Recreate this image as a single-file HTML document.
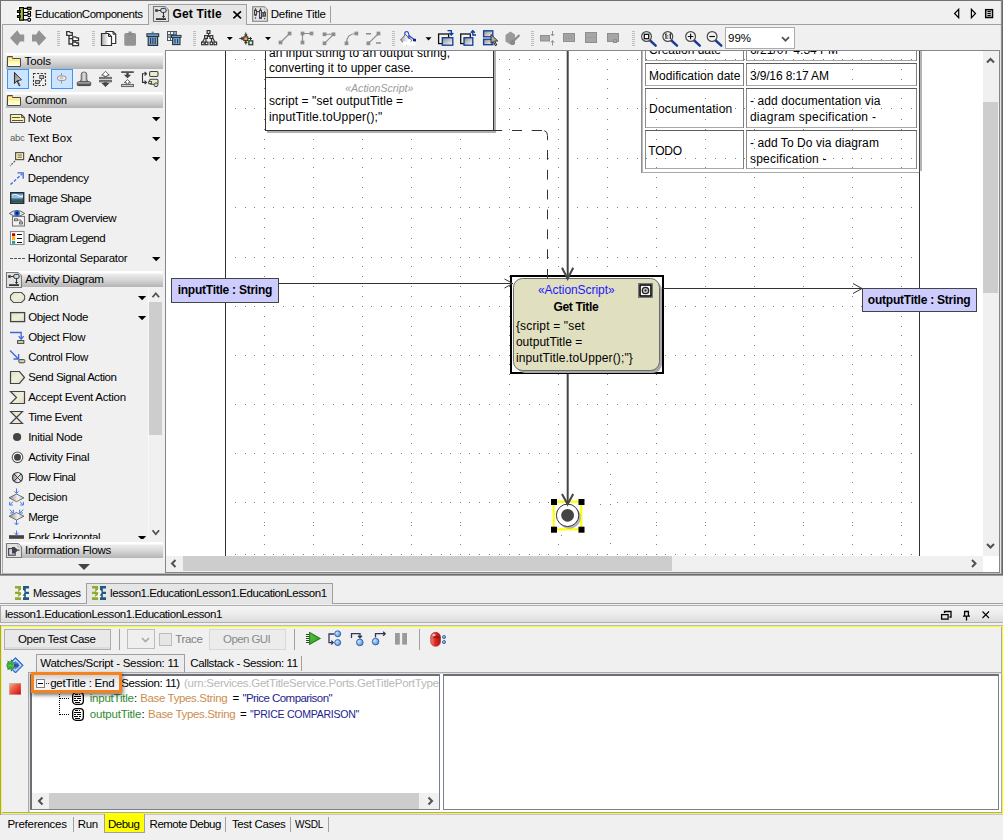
<!DOCTYPE html>
<html><head><meta charset="utf-8"><title>Get Title</title>
<style>
*{box-sizing:border-box;margin:0;padding:0}
html,body{width:1003px;height:840px;overflow:hidden;background:#f0f0f0}
body{position:relative;font-family:"Liberation Sans",sans-serif;font-size:11.5px;color:#000;letter-spacing:-0.4px}
.a{position:absolute}
.t{position:absolute;white-space:pre;line-height:14px;height:14px}
.b{font-weight:bold}
svg{position:absolute;overflow:visible}
.hdr{position:absolute;left:6px;width:157px;height:16px;background:linear-gradient(#ffffff 0,#ffffff 2px,#ececec 3px,#d6d6d6 9px,#b9b9b9 15px,#b4b4b4 16px)}
.dg{font-size:12px;letter-spacing:0;line-height:14px}
</style></head><body>
<!-- outer frame -->
<div class="a" style="left:0;top:0;width:1003px;height:1px;background:#707070"></div>
<div class="a" style="left:0;top:0;width:1px;height:576px;background:#707070"></div>
<div class="a" style="left:1000px;top:1px;width:1px;height:573px;background:#e6e6e6"></div><div class="a" style="left:1001px;top:0;width:1px;height:576px;background:#8c8c8c"></div><div class="a" style="left:1002px;top:0;width:1px;height:576px;background:#6a6a6a"></div>
<div class="a" style="left:0;top:574px;width:1003px;height:1px;background:#6e6e6e"></div><div class="a" style="left:0;top:575px;width:1003px;height:1px;background:#9c9c9c"></div><div class="a" style="left:2px;top:573px;width:999px;height:1px;background:#b8b8b8"></div>
<!-- tab content border -->
<div class="a" style="left:2px;top:24px;width:999px;height:1px;background:#a0a0a0"></div>
<div class="a" style="left:2px;top:24px;width:1px;height:550px;background:#a8a8a8"></div>
<!-- top tabs -->
<div class="a" style="left:148px;top:4px;width:99px;height:21px;background:#e6e6e6;border:1px solid #a0a0a0;border-bottom:none"></div>
<div class="t" style="left: 34.8px; top: 7px; letter-spacing: -0.459px;">EducationComponents</div>
<div class="t b" style="left: 172.4px; top: 7px; font-size: 12px; letter-spacing: 0.175px;">Get Title</div>
<div class="t" style="left: 270.7px; top: 7px; letter-spacing: -0.203px;">Define Title</div>
<div class="a" style="left:330px;top:6px;width:1px;height:17px;background:#a0a0a0"></div>
<svg style="left:0;top:0" width="340" height="26" viewBox="0 0 340 26">
<defs><linearGradient id="an" x1="0" y1="0" x2="1" y2="1"><stop offset="0" stop-color="#9ad0a8"></stop><stop offset=".6" stop-color="#d8e4ff"></stop><stop offset="1" stop-color="#a8d8b0"></stop></linearGradient>
<g id="adoc"><path d="M.5,.5H12L15.5,4V15.5H.5Z" fill="#e2e2e2" stroke="#777" stroke-width="1.1"></path><path d="M12,.5V4H15.5Z" fill="#fff" stroke="#999" stroke-width=".7"></path>
<rect x="2.2" y="3.2" width="2.6" height="2.6" fill="#333"></rect><path d="M5,4.5H8" stroke="#333"></path><rect x="7.7" y="2.4" width="5.4" height="4" rx="1.5" fill="url(#an)" stroke="#333" stroke-width="1"></rect>
<path d="M10.5,6.6V12.2M9.2,10.5H11.8" stroke="#333" stroke-width="1.1"></path><rect x="3" y="12.2" width="10" height="1.8" fill="#333"></rect></g></defs>
<!-- component icon -->
<g stroke="#fff" stroke-width="2.4" fill="#fff"><rect x="19" y="7.2" width="4.8" height="13.4"></rect><rect x="17" y="10.3" width="3" height="2.4"></rect><rect x="17" y="15.3" width="3" height="2.4"></rect><rect x="27" y="7" width="4.2" height="2.6"></rect><circle cx="29.2" cy="12.5" r="1.6"></circle><circle cx="29.2" cy="15.3" r="1.6"></circle><circle cx="29.2" cy="19.8" r="1.6"></circle></g>
<g stroke="#000" stroke-width="1.2"><path d="M24,8.3H27M24,12.5H27.5M24,15.3H27.5M24,19.8H27.5" fill="none"></path>
<rect x="19.6" y="7.6" width="3.8" height="12.6" fill="#a2c637"></rect><rect x="17.5" y="10.6" width="2.6" height="1.8" fill="#a2c637"></rect><rect x="17.5" y="15.6" width="2.6" height="1.8" fill="#a2c637"></rect>
<rect x="27.4" y="7.3" width="3.6" height="2" fill="#a2c637"></rect><circle cx="29.2" cy="12.5" r="1.5" fill="#fff"></circle><circle cx="29.2" cy="15.3" r="1.5" fill="#fff"></circle><circle cx="29.2" cy="19.8" r="1.5" fill="#fff"></circle></g>
<use href="#adoc" x="153" y="6"></use>
<path d="M233.4,11.3L241,18.3M241,11.3L233.4,18.3" stroke="#000" stroke-width="1.6"></path>
<!-- define title icon -->
<path d="M252.7,6.7H264.3L267.4,9.8V21.2H252.7Z" fill="#e4e4e4" stroke="#7a7a7a" stroke-width="1.1"></path><path d="M264.3,6.7V9.8H267.4Z" fill="#fff" stroke="#a0a0a0" stroke-width=".6"></path>
<g stroke="#444" stroke-width="1" fill="#cbc4f2">
<path d="M255.5,8.2V10M255.5,15V16M255.5,17.3V18.8M260.5,8.2V10M264.6,11V12.3" fill="none" stroke-width="1.1"></path>
<rect x="254.5" y="10.1" width="2" height="4.9"></rect><rect x="259.5" y="10.2" width="2" height="8.2"></rect>
<rect x="257" y="11" width="2.2" height="1.2" fill="#444" stroke="none"></rect>
<rect x="262.1" y="12.6" width="1.6" height="3.6" fill="#fff"></rect><rect x="263.9" y="12.6" width="1.6" height="3.6"></rect>
<rect x="264" y="18" width="1.2" height="1.2" fill="#444" stroke="none"></rect></g>
</svg>
<!-- top toolbar -->
<svg style="left:0;top:0" width="1003" height="52" viewBox="0 0 1003 52">
<defs>
<linearGradient id="pg" x1="0" y1="0" x2="1" y2="0"><stop offset="0" stop-color="#a8a8a8"></stop><stop offset=".7" stop-color="#fff"></stop></linearGradient>
<linearGradient id="sq" x1="0" y1="0" x2="1" y2="1"><stop offset="0" stop-color="#888"></stop><stop offset="1" stop-color="#fff"></stop></linearGradient>
<g id="grip" stroke="#bdbdbd" stroke-width="1"><path d="M0,.5h3M0,2.5h3M0,4.5h3M0,6.5h3M0,8.5h3M0,10.5h3M0,12.5h3M0,14.5h3"></path></g>
<g id="mag"><path d="M3.6,4L9.2,9.2" stroke="#1b3b9c" stroke-width="2.4" stroke-linecap="round"></path><circle cx="0" cy="0" r="4.9" fill="#f4f4f4" stroke="#4a4a4a" stroke-width="1.2"></circle></g>
<path id="ddt" d="M0,0H6L3,3.2Z" fill="#000"></path>
</defs>
<!-- back/forward -->
<path d="M10,38L17.3,30.3L20,34.5H24.2V41.5H20L17.3,45.7Z" fill="#939393"></path>
<path d="M46.2,38L38.9,30.3L36.2,34.5H32V41.5H36.2L38.9,45.7Z" fill="#939393"></path>
<use href="#grip" x="57" y="31"></use>
<!-- tree -->
<g fill="#fff" stroke="#333" stroke-width="1.3"><path d="M66.7,31.7H69.5L70.5,32.7H72.3V35.3H66.7Z"></path><path d="M69,35.5V44H73M69,38.7H73" fill="none"></path><path d="M72.7,36.9H75.5L76.5,37.9H78.5V40.7H72.7Z"></path><path d="M72.7,42H75.5L76.5,43H78.5V45.6H72.7Z"></path></g>
<use href="#grip" x="92" y="31"></use>
<!-- copy -->
<path d="M106,31.5H113L115.7,34.2V43.5H106Z" fill="#fff" stroke="#333" stroke-width="1.2"></path>
<path d="M101.5,33.5H108.5L111.5,36.5V45.5H101.5Z" fill="url(#pg)" stroke="#333" stroke-width="1.2"></path>
<path d="M108.5,33.5V36.5H111.5M113,31.5V34.2H115.7" fill="none" stroke="#333" stroke-width="1"></path>
<!-- paste disabled -->
<path d="M124.3,34.5Q124.3,33 126,33H128.5V31.5H131.7V33H134.3Q136,33 136,34.5V44.5Q136,45.8 134.5,45.8H125.8Q124.3,45.8 124.3,44.5Z" fill="#939393"></path>
<path d="M127.5,34.2H132.8" stroke="#858585" stroke-width="1.4"></path>
<!-- trash -->
<path d="M151.6,32.3H153.8" stroke="#5a9ae0" stroke-width="1.4"></path>
<rect x="146.9" y="33.8" width="11.8" height="2.6" fill="#6fb0f0" stroke="#333" stroke-width="1.1"></rect>
<path d="M148.2,36.6H157.6V45.4H148.2Z" fill="#6fb0f0" stroke="#333" stroke-width="1.2"></path>
<path d="M150.6,38V44M152.9,38V44M155.2,38V44" stroke="#333" stroke-width="1.1"></path>
<!-- table trash -->
<rect x="167.5" y="31.5" width="9" height="9" fill="#f4f4f4" stroke="#555"></rect>
<path d="M170.5,31.5V40.5M173.5,31.5V40.5M167.5,34.5H176.5M167.5,37.5H176.5" stroke="#555" stroke-width=".9"></path>
<rect x="168" y="35" width="2.3" height="2.3" fill="#6fb0f0"></rect><rect x="174" y="32" width="2.3" height="2.3" fill="#6fb0f0"></rect>
<rect x="171.5" y="35.4" width="9.5" height="2" fill="#6fb0f0" stroke="#333" stroke-width="1"></rect>
<rect x="172.6" y="37.6" width="7.4" height="7" fill="#6fb0f0" stroke="#333" stroke-width="1.1"></rect>
<path d="M175,39V43.5M177.6,39V43.5" stroke="#333" stroke-width="1"></path>
<use href="#grip" x="193" y="31"></use>
<!-- layout tree -->
<g fill="none" stroke="#333" stroke-width="1.2"><path d="M208.6,33V36M206,38.5V42M211.5,38.5V42M205,37.5L202.5,42M212.3,37.5L215,42M206,36.5H211"></path>
<rect x="207.1" y="30.6" width="2.8" height="2.8" fill="#fff"></rect><rect x="204.6" y="35.6" width="2.8" height="2.8" fill="#fff"></rect><rect x="210" y="35.6" width="2.8" height="2.8" fill="#fff"></rect>
<rect x="201.6" y="42.1" width="2.6" height="2.6" fill="#fff"></rect><rect x="205.3" y="42.1" width="2.6" height="2.6" fill="#fff"></rect><rect x="210.1" y="42.1" width="2.6" height="2.6" fill="#fff"></rect><rect x="214" y="42.1" width="2.6" height="2.6" fill="#fff"></rect></g>
<use href="#ddt" x="226.8" y="37"></use>
<!-- center icon -->
<g stroke="#333" stroke-width="1.1" fill="none"><path d="M239.3,38.5H243M245.8,32.5V36M245.8,41V44.6M248,38.5H252M241.5,37L243,38.5L241.5,40M244.5,34.5L245.8,36L247.2,34.5M244.5,43L245.8,41.5L247.2,43M250.5,37V40"></path>
<rect x="243.8" y="36.8" width="4" height="3.8" fill="#ffa640"></rect><rect x="248.8" y="40.8" width="4" height="4" fill="#3fb860"></rect></g>
<rect x="249.8" y="41.8" width="2" height="2" fill="#eafff0"></rect>
<use href="#ddt" x="265" y="37"></use>
<!-- path style icons (disabled grey) -->
<g fill="#8c8c8c" stroke="#8c8c8c" stroke-width="1.1">
<path d="M280.5,42.5L289.6,33.5" fill="none"></path><rect x="279.2" y="41.2" width="2.6" height="2.6"></rect><rect x="288.3" y="32.2" width="2.6" height="2.6"></rect>
<path d="M302.5,42.5V33.5H311.5" fill="none"></path><rect x="301.2" y="41.2" width="2.6" height="2.6"></rect><rect x="301.2" y="32.2" width="2.6" height="2.6"></rect><rect x="310.2" y="32.2" width="2.6" height="2.6"></rect>
<path d="M324.5,34.3H333.5L324.5,43.3" fill="none"></path><rect x="323.2" y="33" width="2.6" height="2.6"></rect><rect x="332.2" y="33" width="2.6" height="2.6"></rect><rect x="323.2" y="42" width="2.6" height="2.6"></rect>
<path d="M346.5,43.3Q346.5,33.5 356.4,33.5" fill="none"></path><rect x="345.2" y="42" width="2.6" height="2.6"></rect><rect x="355.1" y="32.2" width="2.6" height="2.6"></rect>
<path d="M368.4,43.3L378.5,33.5" fill="none"></path><rect x="367.1" y="42" width="2.6" height="2.6"></rect><rect x="377.2" y="32.2" width="2.6" height="2.6"></rect>
<path d="M366,33.8H371M376,43H381" fill="none" stroke-width="1.5"></path></g>
<use href="#grip" x="392" y="31"></use>
<!-- paint bucket -->
<path d="M400.5,40L405.5,34.5L412,40.5L406.5,45.2Z" fill="url(#pg)" stroke="#666" stroke-width="1"></path>
<path d="M405,35Q404,31.5 407,31.5Q409,32 409,37" fill="none" stroke="#2a50c0" stroke-width="1.2"></path>
<circle cx="409" cy="37.6" r="1" fill="none" stroke="#2a50c0" stroke-width=".9"></circle>
<path d="M409,35.5L414,39.5" stroke="#2a50c0" stroke-width="1.2"></path>
<rect x="413" y="38.8" width="3" height="2.8" fill="#101a8c"></rect>
<rect x="403" y="41.5" width="12.4" height="4" fill="#fff"></rect>
<use href="#ddt" x="425.5" y="37.2"></use>
<!-- z-order icons -->
<rect x="438.6" y="34" width="10" height="9.6" fill="#f4f4f4" stroke="#111" stroke-width="1.3"></rect>
<rect x="442.3" y="37.7" width="10.5" height="7.5" fill="url(#sq)" stroke="#0b3a9a" stroke-width="1.3"></rect>
<path d="M447.5,30.7H451.3V34.6M449.3,33L451.3,35L453.3,33" fill="none" stroke="#0b3a9a" stroke-width="1.3"></path>
<rect x="460.7" y="34" width="9.6" height="9.6" fill="#f4f4f4" stroke="#111" stroke-width="1.3"></rect>
<rect x="464" y="37.7" width="8.8" height="7.5" fill="url(#sq)" stroke="#0b3a9a" stroke-width="1.3"></rect>
<path d="M476,35H472.8V31M470.8,32.7L472.8,30.7L474.8,32.7" fill="none" stroke="#0b3a9a" stroke-width="1.3"></path>
<rect x="483.6" y="30.8" width="9.2" height="6" fill="url(#sq)" stroke="#0b3a9a" stroke-width="1.3"></rect>
<rect x="483.6" y="39.2" width="9.2" height="5.5" fill="url(#sq)" stroke="#0b3a9a" stroke-width="1.3"></rect>
<path d="M491,34.5V43.5L493.3,41.5L495.3,45.8L496.8,45L494.8,41L497.8,41Z" fill="#aaa" stroke="#222" stroke-width=".9"></path>
<!-- disabled brush -->
<path d="M505.5,35L510.5,31.5L515,34.5V41.5L510.5,44.5L505.5,41.5Z" fill="#9a9a9a"></path>
<path d="M519.5,35L513.5,41" stroke="#8a8a8a" stroke-width="2.2"></path><circle cx="512.5" cy="42.5" r="2.6" fill="#8a8a8a"></circle>
<use href="#grip" x="531" y="31"></use>
<!-- disabled rect icons -->
<g fill="#a6a6a6" stroke="#8e8e8e" stroke-width="1">
<rect x="540.5" y="35.5" width="9" height="5.5"></rect>
<path d="M552.5,31V35.5M550.8,34L552.5,36L554.2,34M552.5,45.5V41M550.8,42.5L552.5,40.5L554.2,42.5" fill="none"></path>
<rect x="563.5" y="33.5" width="11" height="8"></rect><rect x="585.5" y="32.5" width="11" height="10"></rect><rect x="607.5" y="33.5" width="11" height="8"></rect>
</g>
<path d="M565.5,36H572.5M565.5,38.5H572.5" stroke="#929292" stroke-dasharray="1.5 1"></path><path d="M586,37.5H596.5" stroke="#9c9c9c"></path><rect x="613.5" y="39.5" width="3" height="3" fill="#a6a6a6" stroke="#8e8e8e"></rect>
<use href="#grip" x="632" y="31"></use>
<!-- zoom icons -->
<use href="#mag" x="646.5" y="36.5"></use><rect x="644.3" y="34.3" width="4.4" height="4.4" fill="#fff" stroke="#111" stroke-width="1.3"></rect>
<use href="#mag" x="667.8" y="36.5"></use><path d="M665.2,34.5L666,34V39M669.5,34.5L670.3,34V39" stroke="#111" stroke-width="1.1" fill="none"></path><rect x="667.3" y="35.3" width="1" height="1" fill="#111"></rect><rect x="667.3" y="37.6" width="1" height="1" fill="#111"></rect>
<use href="#mag" x="690.6" y="36.5"></use><path d="M687.8,36.5H693.4M690.6,33.7V39.3" stroke="#111" stroke-width="1.2"></path>
<use href="#mag" x="712.1" y="36.5"></use><path d="M709.3,36.5H714.9" stroke="#111" stroke-width="1.2"></path>
<!-- zoom combo -->
<rect x="725.5" y="27.5" width="69" height="21" fill="#fff" stroke="#ababab"></rect>
<path d="M782,37.2L785.5,40.7L789,37.2" fill="none" stroke="#555" stroke-width="1.8"></path>
<!-- tab nav icons -->
<g fill="none" stroke="#000" stroke-width="1.2"><path d="M958.7,9.3V17.7L954.6,13.5Z"></path><path d="M971.4,9.3V17.7L975.5,13.5Z"></path><rect x="985.7" y="9.7" width="6.8" height="7.8" stroke-width="1.5"></rect><path d="M987.4,11.6H990.8M987.4,13.6H990.8M987.4,15.6H990.8" stroke-width="1.1"></path></g>
</svg>
<div class="t" style="left:728px;top:31px;letter-spacing:0">99%</div>
<!-- palette -->
<div class="hdr" style="top:53px"></div>
<svg style="left:7px;top:53px" width="14" height="16" viewBox="0 0 14 16"><defs><linearGradient id="fg53" x1="0" y1="0" x2="0" y2="1"><stop offset="0" stop-color="#fff9a0"></stop><stop offset=".45" stop-color="#ffe98a"></stop><stop offset=".55" stop-color="#fffbb8"></stop><stop offset="1" stop-color="#fffff0"></stop></linearGradient></defs><path d="M.5,3.5H5.5V5.5H13.5V13.5H.5Z" fill="url(#fg53)" stroke="#4a4a4a"></path><path d="M1,4.5H5.5" stroke="#e8b860"></path></svg>
<div class="t" style="left: 24.5px; top: 54px; letter-spacing: -0.115px;">Tools</div>
<div class="hdr" style="top:92px"></div>
<svg style="left:7px;top:92px" width="14" height="16" viewBox="0 0 14 16"><defs><linearGradient id="fg92" x1="0" y1="0" x2="0" y2="1"><stop offset="0" stop-color="#fff9a0"></stop><stop offset=".45" stop-color="#ffe98a"></stop><stop offset=".55" stop-color="#fffbb8"></stop><stop offset="1" stop-color="#fffff0"></stop></linearGradient></defs><path d="M.5,3.5H5.5V5.5H13.5V13.5H.5Z" fill="url(#fg92)" stroke="#4a4a4a"></path><path d="M1,4.5H5.5" stroke="#e8b860"></path></svg>
<div class="t" style="left: 24.9px; top: 93px; letter-spacing: -0.3px; transform-origin: 0px 50%; transform: scaleX(0.9279);">Common</div>
<div class="hdr" style="top:271px"></div>
<svg style="left:6px;top:271px" width="17" height="17" viewBox="0 -1 17 17"><use href="#adoc" x="0" y="0"></use></svg>
<div class="t" style="left: 25.3px; top: 272px; letter-spacing: -0.299px;">Activity Diagram</div>
<div class="hdr" style="top:542px"></div>
<svg style="left:6px;top:542px" width="17" height="17" viewBox="0 -1 17 17"><path d="M.5,.5H12L15.5,4V14.5H.5Z" fill="#e2e2e2" stroke="#777" stroke-width="1.1"></path><path d="M12,.5V4H15.5Z" fill="#fff" stroke="#999" stroke-width=".7"></path><rect x="2.6" y="5.6" width="6.6" height="6.6" fill="#d8d0f0" stroke="#444" stroke-width="1.1"></rect><path d="M6,4H8.5L11.5,6.5H13.5V7.8H11.5L8.5,10.4H6Z" fill="#444"></path></svg>
<div class="t" style="left: 25px; top: 543px; letter-spacing: -0.279px;">Information Flows</div>
<div class="a" style="left:7px;top:69px;width:22px;height:20px;background:#cce4ff;border:1px solid #3399ff"></div>
<div class="a" style="left:51px;top:69px;width:22px;height:20px;background:#cce4ff;border:1px solid #3399ff"></div>
<svg style="left:0;top:0" width="170" height="300" viewBox="0 0 170 300"><defs>
<linearGradient id="og" x1="0" y1="0" x2="1" y2="1"><stop offset="0" stop-color="#dfe3c0"></stop><stop offset=".5" stop-color="#eef0dc"></stop><stop offset="1" stop-color="#dcdfc0"></stop></linearGradient>
<linearGradient id="dm" x1="0" y1="0" x2="1" y2="0"><stop offset="0" stop-color="#8a8a8a"></stop><stop offset=".6" stop-color="#f4f4f4"></stop><stop offset="1" stop-color="#b0b0b0"></stop></linearGradient>
<linearGradient id="img" x1="0" y1="0" x2="0" y2="1"><stop offset="0" stop-color="#4f8fdc"></stop><stop offset=".45" stop-color="#9cc4ea"></stop><stop offset=".6" stop-color="#3c6f78"></stop><stop offset=".85" stop-color="#2a5050"></stop><stop offset="1" stop-color="#7fb0e0"></stop></linearGradient>
<linearGradient id="stp" x1="0" y1="0" x2="1" y2="0"><stop offset="0" stop-color="#555"></stop><stop offset=".5" stop-color="#e8e8e8"></stop><stop offset="1" stop-color="#555"></stop></linearGradient>
<linearGradient id="stb" x1="0" y1="0" x2="0" y2="1"><stop offset="0" stop-color="#ddd"></stop><stop offset="1" stop-color="#222"></stop></linearGradient>
<linearGradient id="cur" x1="0" y1="0" x2="1" y2="1"><stop offset="0" stop-color="#777"></stop><stop offset="1" stop-color="#eee"></stop></linearGradient>
</defs>
<!-- select cursor -->
<path d="M14.5,72.5V83L17,80.8L19.3,85.5" fill="none" stroke="#333" stroke-width="1.1" stroke-dasharray="0"></path>
<path d="M14.5,72.5V83.2L17.2,80.7L21.5,79.8Z" fill="url(#cur)" stroke="#333" stroke-width="1"></path>
<path d="M17.5,81L19.8,86" stroke="#333" stroke-width="1.6" stroke-dasharray="1.4 .8"></path>
<!-- group select -->
<rect x="33.5" y="73.5" width="12" height="12" fill="none" stroke="#333" stroke-width="1.1" stroke-dasharray="2.2 1.4"></rect>
<rect x="39.8" y="75.6" width="3.8" height="2.8" fill="#d8d8d8" stroke="#444"></rect><rect x="35.6" y="80.6" width="3.8" height="2.8" fill="#d8d8d8" stroke="#444"></rect><path d="M41.5,78.5V80L39.5,82" fill="none" stroke="#444"></path>
<!-- sticky -->
<path d="M61.5,73V75.5M61.5,81V83.5" stroke="#999" stroke-width="1"></path>
<rect x="57.5" y="76" width="8.5" height="4.4" rx="2.2" fill="#fff" stroke="#8a8a8a" stroke-width="1"></rect><rect x="59.5" y="77" width="4" height="2.4" fill="#c8c8c8"></rect>
<!-- stamp -->
<path d="M81.2,74.2Q81.2,72 84,72Q86.8,72 86.8,74.2V79Q86.8,80.5 88.5,81.5H79.5Q81.2,80.5 81.2,79Z" fill="url(#stp)" stroke="#555" stroke-width=".8"></path>
<rect x="77.3" y="81.8" width="13.4" height="3.8" rx="1" fill="url(#stb)" stroke="#333" stroke-width=".8"></rect>
<!-- space in/out -->
<path d="M105.5,71.3L109.3,75.2H107V76.6H104V75.2H101.7Z" fill="#fff" stroke="#555" stroke-width=".9"></path>
<rect x="99.6" y="77.3" width="11.8" height="1.5" fill="#999" stroke="#555" stroke-width=".8"></rect><rect x="99.6" y="80.4" width="11.8" height="1.5" fill="#999" stroke="#555" stroke-width=".8"></rect>
<path d="M105.5,86.9L101.2,82.7H104V82.2H107V82.7H109.8Z" fill="#444"></path>
<rect x="121.2" y="71.3" width="12.6" height="1.6" fill="#444"></rect>
<path d="M126.3,72.9H128.7V74.8H131.2L127.5,78.2L123.8,74.8H126.3Z" fill="#444"></path>
<path d="M127.5,79.6L130.6,82.6H128.7V84.2H126.3V82.6H124.4Z" fill="#fff" stroke="#555" stroke-width=".9"></path>
<rect x="121.6" y="84.4" width="11.8" height="2.2" fill="#ccc" stroke="#555" stroke-width=".9"></rect>
<!-- convert -->
<path d="M146.3,73.8H142.5V82.4H146.3M144.6,72L146.5,73.8L144.6,75.6M144.6,80.6L146.5,82.4L144.6,84.2" fill="none" stroke="#333" stroke-width="1.1"></path>
<rect x="149.6" y="71.5" width="8.4" height="5" rx="1.2" fill="#e9edc4" stroke="#444" stroke-width="1.1"></rect>
<rect x="149.6" y="79.3" width="8.4" height="5" rx="1.2" fill="#e9edc4" stroke="#444" stroke-width="1.1"></rect>
<rect x="148.6" y="81.6" width="3" height="2" fill="#e9edc4" stroke="#444" stroke-width=".9"></rect>
<circle cx="156" cy="84.8" r="1.9" fill="#fff" stroke="#444" stroke-width="1"></circle><circle cx="156" cy="84.8" r=".6" fill="#444"></circle>

<!-- note -->
<path d="M10.5,114.5H21.5L24.5,117.5V122.5H10.5Z" fill="#fff3b0" stroke="#555" stroke-width="1.2"></path><path d="M21.5,114.5V117.5H24.5" fill="none" stroke="#555" stroke-width="1"></path><path d="M12,117.5H20M12,120.5H23" fill="none" stroke="#555" stroke-width="1" shape-rendering="crispEdges"></path>
<!-- anchor -->
<rect x="15.6" y="152.6" width="8" height="7" fill="#fff3b0" stroke="#555" stroke-width="1.2"></rect><path d="M17.5,155H22M17.5,157.2H22" stroke="#555" stroke-width=".9"></path><path d="M15,161L10,166" stroke="#555" stroke-width="1.2" stroke-dasharray="2 1.2"></path>
<!-- dependency -->
<path d="M10.5,184.5L22,174" stroke="#3a66d8" stroke-width="1.3" stroke-dasharray="3 1.6" fill="none"></path><path d="M17.5,172.8H23.2V178.8" stroke="#3a66d8" stroke-width="1.3" fill="none"></path>
<!-- image shape -->
<rect x="10.7" y="192.7" width="13" height="10.6" fill="url(#img)" stroke="#2c2c2c" stroke-width="1.4"></rect><path d="M12,195.5Q15,193.5 18,195.5T23,195.5" stroke="#fff" stroke-width="1.2" fill="none" opacity=".85"></path>
<!-- overview -->
<rect x="12.5" y="216.5" width="12" height="9.5" fill="#f4f4f4" stroke="#777" stroke-width="1.1"></rect>
<rect x="14.5" y="218.8" width="3" height="2" fill="#ccd" stroke="#555" stroke-width=".8"></rect><rect x="19.5" y="222" width="3" height="2" fill="#ccd" stroke="#555" stroke-width=".8"></rect><path d="M17.5,220H21V222" fill="none" stroke="#555" stroke-width=".8"></path>
<path d="M9.3,213.5Q17,207.5 24.7,213.5Q17,219 9.3,213.5Z" fill="#e8e8e8" stroke="#666" stroke-width="1"></path><circle cx="17" cy="213.3" r="2.8" fill="#1a5fe6"></circle><circle cx="17" cy="213.3" r="1.2" fill="#10204a"></circle>
<!-- legend -->
<rect x="10.5" y="231.5" width="13.5" height="13" fill="#fff" stroke="#8a8a8a" stroke-width="1.1"></rect>
<rect x="12" y="233.3" width="3.2" height="3" fill="#c80000"></rect><rect x="12" y="237" width="3.2" height="3" fill="#ffb400"></rect><rect x="12" y="240.8" width="3.2" height="3" fill="#2a9a8a"></rect>
<path d="M17,234.5H22M17,238.5H22M17,242.5H22" stroke="#111" stroke-width="1" shape-rendering="crispEdges"></path>
<!-- separator -->
<path d="M10,258.5H25" stroke="#555" stroke-width="1.1" stroke-dasharray="3 1"></path>
</svg>
<div class="t" style="left: 27.7px; top: 111px; letter-spacing: -0.066px;">Note</div>
<svg style="left:152.3px;top:117px" width="9" height="5"><path d="M0,0H8.4L4.2,4.3Z" fill="#000"></path></svg>
<div class="t" style="left: 27.7px; top: 131px; letter-spacing: 0.027px;">Text Box</div>
<svg style="left:152.3px;top:137px" width="9" height="5"><path d="M0,0H8.4L4.2,4.3Z" fill="#000"></path></svg>
<div class="t" style="left: 27.7px; top: 151px; letter-spacing: -0.307px;">Anchor</div>
<svg style="left:152.3px;top:157px" width="9" height="5"><path d="M0,0H8.4L4.2,4.3Z" fill="#000"></path></svg>
<div class="t" style="left: 27.7px; top: 171px; letter-spacing: -0.364px;">Dependency</div>
<div class="t" style="left: 27.7px; top: 191px; letter-spacing: -0.452px;">Image Shape</div>
<div class="t" style="left: 27.7px; top: 211px; letter-spacing: -0.379px;">Diagram Overview</div>
<div class="t" style="left: 27.7px; top: 231px; letter-spacing: -0.549px;">Diagram Legend</div>
<div class="t" style="left: 27.7px; top: 251px; letter-spacing: -0.294px;">Horizontal Separator</div>
<svg style="left:152.3px;top:257px" width="9" height="5"><path d="M0,0H8.4L4.2,4.3Z" fill="#000"></path></svg>
<div class="t" style="left:10px;top:131px;font-size:9.5px;color:#5a5a5a;letter-spacing:-0.25px">abc</div>
<div class="a" style="left:4px;top:287px;width:145px;height:252px;overflow:hidden"><div class="a" style="left:-4px;top:-287px;width:200px;height:600px">
<div class="t" style="left: 28.2px; top: 290px; letter-spacing: -0.314px;">Action</div>
<svg style="left:137.6px;top:296px" width="9" height="5"><path d="M0,0H8.2L4.1,4.3Z" fill="#000"></path></svg>
<div class="t" style="left: 28.2px; top: 310px; letter-spacing: -0.374px;">Object Node</div>
<svg style="left:137.6px;top:316px" width="9" height="5"><path d="M0,0H8.2L4.1,4.3Z" fill="#000"></path></svg>
<div class="t" style="left: 28.2px; top: 330px; letter-spacing: -0.342px;">Object Flow</div>
<div class="t" style="left: 28.2px; top: 350px; letter-spacing: -0.397px;">Control Flow</div>
<div class="t" style="left: 28.2px; top: 370px; letter-spacing: -0.467px;">Send Signal Action</div>
<div class="t" style="left: 28.2px; top: 390px; letter-spacing: -0.244px;">Accept Event Action</div>
<div class="t" style="left: 28.2px; top: 410px; letter-spacing: -0.426px;">Time Event</div>
<div class="t" style="left: 28.2px; top: 430px; letter-spacing: -0.286px;">Initial Node</div>
<div class="t" style="left: 28.2px; top: 450px; letter-spacing: -0.242px;">Activity Final</div>
<div class="t" style="left: 28.2px; top: 470px; letter-spacing: -0.523px;">Flow Final</div>
<div class="t" style="left: 28.2px; top: 490px; letter-spacing: -0.3px; transform-origin: 0px 50%; transform: scaleX(0.9426);">Decision</div>
<div class="t" style="left: 28.2px; top: 510px; letter-spacing: -0.552px;">Merge</div>
<div class="t" style="left: 28.2px; top: 530px; letter-spacing: -0.398px;">Fork Horizontal</div>
<svg style="left:137.6px;top:536px" width="9" height="5"><path d="M0,0H8.2L4.1,4.3Z" fill="#000"></path></svg>
<svg style="left:0;top:0" width="170" height="600" viewBox="0 0 170 600">
<!-- action -->
<path d="M13.5,292.5H21.5L24.6,295.5V299.5L21.5,302.5H13.5L10.5,299.5V295.5Z" fill="url(#og)" stroke="#555" stroke-width="1.1"></path>
<rect x="10.6" y="312.6" width="14" height="9" fill="url(#og)" stroke="#444" stroke-width="1.3"></rect>
<!-- object flow -->
<path d="M10,332.5H21.2V339" fill="none" stroke="#3a66e0" stroke-width="1.3"></path><path d="M18.7,336.2L21.2,339.2L23.7,336.2" fill="none" stroke="#3a66e0" stroke-width="1.3"></path><rect x="17.6" y="340.6" width="6.2" height="2.8" fill="#d8dca0" stroke="#444" stroke-width="1"></rect>
<!-- control flow -->
<path d="M10,350.5L18.2,358.7" stroke="#3a66e0" stroke-width="1.3"></path><path d="M18.6,354V359H13.5" fill="none" stroke="#3a66e0" stroke-width="1.3"></path><rect x="18.8" y="359.6" width="6" height="3.2" rx="1" fill="#d0d0a0" stroke="#444" stroke-width="1"></rect>
<!-- send signal -->
<path d="M10.5,371.5H19.5L24.5,377.5L19.5,383.5H10.5Z" fill="url(#og)" stroke="#444" stroke-width="1.2"></path>
<path d="M10.5,391.5H24.5V403.5H10.5L16.5,397.5Z" fill="url(#og)" stroke="#444" stroke-width="1.2"></path>
<path d="M10.5,411.5H22.5L10.5,423.5H22.5Z" fill="url(#og)" stroke="#444" stroke-width="1.2"></path>
<circle cx="17.1" cy="437" r="4.1" fill="#444"></circle>
<circle cx="17.5" cy="457.3" r="5.3" fill="#fff" stroke="#555" stroke-width="1.1"></circle><circle cx="17.5" cy="457.3" r="3.5" fill="#444"></circle>
<circle cx="17.5" cy="477.6" r="5.1" fill="url(#dm)" stroke="#444" stroke-width="1.1"></circle><path d="M14,474.1L21,481.1M21,474.1L14,481.1" stroke="#333" stroke-width="1"></path>
<!-- decision -->
<path d="M9,497.8L16.5,494L24,497.8L16.5,501.7Z" fill="url(#dm)" stroke="#666" stroke-width=".9"></path>
<g fill="none" stroke="#4a78ee" stroke-width="1"><path d="M16.5,488.5V493.5M14.5,491.3L16.5,493.5L18.5,491.3"></path><path d="M13,501.8L9.8,504.8M9.6,501.8V505H12.8"></path><path d="M20,501.8L23.2,504.8M23.4,501.8V505H20.2"></path>
<path d="M9.6,509.5L13.2,513M10,513H13.3V509.7"></path><path d="M23.4,509.5L19.8,513M23,513H19.7V509.7"></path><path d="M16.5,520V525M14.5,522.8L16.5,525L18.5,522.8"></path>
<path d="M16.5,530.5V535M14.5,532.8L16.5,535L18.5,532.8"></path></g>
<path d="M9,516.2L16.5,512.5L24,516.2L16.5,520Z" fill="url(#dm)" stroke="#666" stroke-width=".9"></path>
<rect x="9" y="535.2" width="15" height="3.6" fill="#444"></rect>
</svg>
</div></div>
<div class="a" style="left:148px;top:287px;width:1px;height:252px;background:#f8f8f8"></div>
<div class="a" style="left:149px;top:287px;width:14px;height:252px;background:#f0f0f0"></div>
<div class="a" style="left:149px;top:302px;width:13px;height:133px;background:#cdcdcd"></div>
<svg style="left:0;top:0" width="200" height="600"><g fill="none" stroke="#505050" stroke-width="1.8"><path d="M152.5,297.3L155.8,293.3L159.1,297.3"></path><path d="M152.5,530.2L155.8,534.2L159.1,530.2"></path></g><path d="M78,564H90L84,570Z" fill="#444"></path></svg>
<!-- canvas -->
<div class="a" style="left:165px;top:50px;width:835px;height:523px;border:1px solid #828790;background:#fff"></div>
<div class="a" id="cv" style="left:166px;top:51px;width:817px;height:505px;overflow:hidden;background:#fff">
<div class="a" style="left:-166px;top:-51px;width:1003px;height:840px">
<svg style="left:0;top:0" width="1003" height="840" viewBox="0 0 1003 840">
<path d="M235,59.5h1M245,59.5h1M254,59.5h1M264,59.5h1M273,59.5h1M283,59.5h1M293,59.5h1M303,59.5h1M313,59.5h1M323,59.5h1M333,59.5h1M343,59.5h1M352,59.5h1M362,59.5h1M371,59.5h1M381,59.5h1M391,59.5h1M401,59.5h1M411,59.5h1M421,59.5h1M431,59.5h1M441,59.5h1M450,59.5h1M460,59.5h1M469,59.5h1M479,59.5h1M489,59.5h1M499,59.5h1M509,59.5h1M519,59.5h1M529,59.5h1M539,59.5h1M548,59.5h1M558,59.5h1M567,59.5h1M577,59.5h1M587,59.5h1M597,59.5h1M607,59.5h1M617,59.5h1M627,59.5h1M637,59.5h1M646,59.5h1M656,59.5h1M665,59.5h1M675,59.5h1M685,59.5h1M695,59.5h1M705,59.5h1M715,59.5h1M725,59.5h1M735,59.5h1M744,59.5h1M754,59.5h1M763,59.5h1M773,59.5h1M783,59.5h1M793,59.5h1M803,59.5h1M813,59.5h1M823,59.5h1M833,59.5h1M842,59.5h1M852,59.5h1M861,59.5h1M871,59.5h1M881,59.5h1M891,59.5h1M901,59.5h1M911,59.5h1M264,69.5h1M313,69.5h1M362,69.5h1M411,69.5h1M460,69.5h1M509,69.5h1M558,69.5h1M607,69.5h1M656,69.5h1M705,69.5h1M754,69.5h1M803,69.5h1M852,69.5h1M901,69.5h1M264,79.5h1M313,79.5h1M362,79.5h1M411,79.5h1M460,79.5h1M509,79.5h1M558,79.5h1M607,79.5h1M656,79.5h1M705,79.5h1M754,79.5h1M803,79.5h1M852,79.5h1M901,79.5h1M264,88.5h1M313,88.5h1M362,88.5h1M411,88.5h1M460,88.5h1M509,88.5h1M558,88.5h1M607,88.5h1M656,88.5h1M705,88.5h1M754,88.5h1M803,88.5h1M852,88.5h1M901,88.5h1M264,98.5h1M313,98.5h1M362,98.5h1M411,98.5h1M460,98.5h1M509,98.5h1M558,98.5h1M607,98.5h1M656,98.5h1M705,98.5h1M754,98.5h1M803,98.5h1M852,98.5h1M901,98.5h1M235,108.5h1M245,108.5h1M254,108.5h1M264,108.5h1M273,108.5h1M283,108.5h1M293,108.5h1M303,108.5h1M313,108.5h1M323,108.5h1M333,108.5h1M343,108.5h1M352,108.5h1M362,108.5h1M371,108.5h1M381,108.5h1M391,108.5h1M401,108.5h1M411,108.5h1M421,108.5h1M431,108.5h1M441,108.5h1M450,108.5h1M460,108.5h1M469,108.5h1M479,108.5h1M489,108.5h1M499,108.5h1M509,108.5h1M519,108.5h1M529,108.5h1M539,108.5h1M548,108.5h1M558,108.5h1M567,108.5h1M577,108.5h1M587,108.5h1M597,108.5h1M607,108.5h1M617,108.5h1M627,108.5h1M637,108.5h1M646,108.5h1M656,108.5h1M665,108.5h1M675,108.5h1M685,108.5h1M695,108.5h1M705,108.5h1M715,108.5h1M725,108.5h1M735,108.5h1M744,108.5h1M754,108.5h1M763,108.5h1M773,108.5h1M783,108.5h1M793,108.5h1M803,108.5h1M813,108.5h1M823,108.5h1M833,108.5h1M842,108.5h1M852,108.5h1M861,108.5h1M871,108.5h1M881,108.5h1M891,108.5h1M901,108.5h1M911,108.5h1M264,119.5h1M313,119.5h1M362,119.5h1M411,119.5h1M460,119.5h1M509,119.5h1M558,119.5h1M607,119.5h1M656,119.5h1M705,119.5h1M754,119.5h1M803,119.5h1M852,119.5h1M901,119.5h1M264,129.5h1M313,129.5h1M362,129.5h1M411,129.5h1M460,129.5h1M509,129.5h1M558,129.5h1M607,129.5h1M656,129.5h1M705,129.5h1M754,129.5h1M803,129.5h1M852,129.5h1M901,129.5h1M264,139.5h1M313,139.5h1M362,139.5h1M411,139.5h1M460,139.5h1M509,139.5h1M558,139.5h1M607,139.5h1M656,139.5h1M705,139.5h1M754,139.5h1M803,139.5h1M852,139.5h1M901,139.5h1M264,148.5h1M313,148.5h1M362,148.5h1M411,148.5h1M460,148.5h1M509,148.5h1M558,148.5h1M607,148.5h1M656,148.5h1M705,148.5h1M754,148.5h1M803,148.5h1M852,148.5h1M901,148.5h1M235,158.5h1M245,158.5h1M254,158.5h1M264,158.5h1M273,158.5h1M283,158.5h1M293,158.5h1M303,158.5h1M313,158.5h1M323,158.5h1M333,158.5h1M343,158.5h1M352,158.5h1M362,158.5h1M371,158.5h1M381,158.5h1M391,158.5h1M401,158.5h1M411,158.5h1M421,158.5h1M431,158.5h1M441,158.5h1M450,158.5h1M460,158.5h1M469,158.5h1M479,158.5h1M489,158.5h1M499,158.5h1M509,158.5h1M519,158.5h1M529,158.5h1M539,158.5h1M548,158.5h1M558,158.5h1M567,158.5h1M577,158.5h1M587,158.5h1M597,158.5h1M607,158.5h1M617,158.5h1M627,158.5h1M637,158.5h1M646,158.5h1M656,158.5h1M665,158.5h1M675,158.5h1M685,158.5h1M695,158.5h1M705,158.5h1M715,158.5h1M725,158.5h1M735,158.5h1M744,158.5h1M754,158.5h1M763,158.5h1M773,158.5h1M783,158.5h1M793,158.5h1M803,158.5h1M813,158.5h1M823,158.5h1M833,158.5h1M842,158.5h1M852,158.5h1M861,158.5h1M871,158.5h1M881,158.5h1M891,158.5h1M901,158.5h1M911,158.5h1M264,167.5h1M313,167.5h1M362,167.5h1M411,167.5h1M460,167.5h1M509,167.5h1M558,167.5h1M607,167.5h1M656,167.5h1M705,167.5h1M754,167.5h1M803,167.5h1M852,167.5h1M901,167.5h1M264,177.5h1M313,177.5h1M362,177.5h1M411,177.5h1M460,177.5h1M509,177.5h1M558,177.5h1M607,177.5h1M656,177.5h1M705,177.5h1M754,177.5h1M803,177.5h1M852,177.5h1M901,177.5h1M264,187.5h1M313,187.5h1M362,187.5h1M411,187.5h1M460,187.5h1M509,187.5h1M558,187.5h1M607,187.5h1M656,187.5h1M705,187.5h1M754,187.5h1M803,187.5h1M852,187.5h1M901,187.5h1M264,197.5h1M313,197.5h1M362,197.5h1M411,197.5h1M460,197.5h1M509,197.5h1M558,197.5h1M607,197.5h1M656,197.5h1M705,197.5h1M754,197.5h1M803,197.5h1M852,197.5h1M901,197.5h1M235,207.5h1M245,207.5h1M254,207.5h1M264,207.5h1M273,207.5h1M283,207.5h1M293,207.5h1M303,207.5h1M313,207.5h1M323,207.5h1M333,207.5h1M343,207.5h1M352,207.5h1M362,207.5h1M371,207.5h1M381,207.5h1M391,207.5h1M401,207.5h1M411,207.5h1M421,207.5h1M431,207.5h1M441,207.5h1M450,207.5h1M460,207.5h1M469,207.5h1M479,207.5h1M489,207.5h1M499,207.5h1M509,207.5h1M519,207.5h1M529,207.5h1M539,207.5h1M548,207.5h1M558,207.5h1M567,207.5h1M577,207.5h1M587,207.5h1M597,207.5h1M607,207.5h1M617,207.5h1M627,207.5h1M637,207.5h1M646,207.5h1M656,207.5h1M665,207.5h1M675,207.5h1M685,207.5h1M695,207.5h1M705,207.5h1M715,207.5h1M725,207.5h1M735,207.5h1M744,207.5h1M754,207.5h1M763,207.5h1M773,207.5h1M783,207.5h1M793,207.5h1M803,207.5h1M813,207.5h1M823,207.5h1M833,207.5h1M842,207.5h1M852,207.5h1M861,207.5h1M871,207.5h1M881,207.5h1M891,207.5h1M901,207.5h1M911,207.5h1M264,218.5h1M313,218.5h1M362,218.5h1M411,218.5h1M460,218.5h1M509,218.5h1M558,218.5h1M607,218.5h1M656,218.5h1M705,218.5h1M754,218.5h1M803,218.5h1M852,218.5h1M901,218.5h1M264,227.5h1M313,227.5h1M362,227.5h1M411,227.5h1M460,227.5h1M509,227.5h1M558,227.5h1M607,227.5h1M656,227.5h1M705,227.5h1M754,227.5h1M803,227.5h1M852,227.5h1M901,227.5h1M264,238.5h1M313,238.5h1M362,238.5h1M411,238.5h1M460,238.5h1M509,238.5h1M558,238.5h1M607,238.5h1M656,238.5h1M705,238.5h1M754,238.5h1M803,238.5h1M852,238.5h1M901,238.5h1M264,247.5h1M313,247.5h1M362,247.5h1M411,247.5h1M460,247.5h1M509,247.5h1M558,247.5h1M607,247.5h1M656,247.5h1M705,247.5h1M754,247.5h1M803,247.5h1M852,247.5h1M901,247.5h1M235,257.5h1M245,257.5h1M254,257.5h1M264,257.5h1M273,257.5h1M283,257.5h1M293,257.5h1M303,257.5h1M313,257.5h1M323,257.5h1M333,257.5h1M343,257.5h1M352,257.5h1M362,257.5h1M371,257.5h1M381,257.5h1M391,257.5h1M401,257.5h1M411,257.5h1M421,257.5h1M431,257.5h1M441,257.5h1M450,257.5h1M460,257.5h1M469,257.5h1M479,257.5h1M489,257.5h1M499,257.5h1M509,257.5h1M519,257.5h1M529,257.5h1M539,257.5h1M548,257.5h1M558,257.5h1M567,257.5h1M577,257.5h1M587,257.5h1M597,257.5h1M607,257.5h1M617,257.5h1M627,257.5h1M637,257.5h1M646,257.5h1M656,257.5h1M665,257.5h1M675,257.5h1M685,257.5h1M695,257.5h1M705,257.5h1M715,257.5h1M725,257.5h1M735,257.5h1M744,257.5h1M754,257.5h1M763,257.5h1M773,257.5h1M783,257.5h1M793,257.5h1M803,257.5h1M813,257.5h1M823,257.5h1M833,257.5h1M842,257.5h1M852,257.5h1M861,257.5h1M871,257.5h1M881,257.5h1M891,257.5h1M901,257.5h1M911,257.5h1M264,266.5h1M313,266.5h1M362,266.5h1M411,266.5h1M460,266.5h1M509,266.5h1M558,266.5h1M607,266.5h1M656,266.5h1M705,266.5h1M754,266.5h1M803,266.5h1M852,266.5h1M901,266.5h1M264,276.5h1M313,276.5h1M362,276.5h1M411,276.5h1M460,276.5h1M509,276.5h1M558,276.5h1M607,276.5h1M656,276.5h1M705,276.5h1M754,276.5h1M803,276.5h1M852,276.5h1M901,276.5h1M264,286.5h1M313,286.5h1M362,286.5h1M411,286.5h1M460,286.5h1M509,286.5h1M558,286.5h1M607,286.5h1M656,286.5h1M705,286.5h1M754,286.5h1M803,286.5h1M852,286.5h1M901,286.5h1M264,296.5h1M313,296.5h1M362,296.5h1M411,296.5h1M460,296.5h1M509,296.5h1M558,296.5h1M607,296.5h1M656,296.5h1M705,296.5h1M754,296.5h1M803,296.5h1M852,296.5h1M901,296.5h1M235,306.5h1M245,306.5h1M254,306.5h1M264,306.5h1M273,306.5h1M283,306.5h1M293,306.5h1M303,306.5h1M313,306.5h1M323,306.5h1M333,306.5h1M343,306.5h1M352,306.5h1M362,306.5h1M371,306.5h1M381,306.5h1M391,306.5h1M401,306.5h1M411,306.5h1M421,306.5h1M431,306.5h1M441,306.5h1M450,306.5h1M460,306.5h1M469,306.5h1M479,306.5h1M489,306.5h1M499,306.5h1M509,306.5h1M519,306.5h1M529,306.5h1M539,306.5h1M548,306.5h1M558,306.5h1M567,306.5h1M577,306.5h1M587,306.5h1M597,306.5h1M607,306.5h1M617,306.5h1M627,306.5h1M637,306.5h1M646,306.5h1M656,306.5h1M665,306.5h1M675,306.5h1M685,306.5h1M695,306.5h1M705,306.5h1M715,306.5h1M725,306.5h1M735,306.5h1M744,306.5h1M754,306.5h1M763,306.5h1M773,306.5h1M783,306.5h1M793,306.5h1M803,306.5h1M813,306.5h1M823,306.5h1M833,306.5h1M842,306.5h1M852,306.5h1M861,306.5h1M871,306.5h1M881,306.5h1M891,306.5h1M901,306.5h1M911,306.5h1M264,316.5h1M313,316.5h1M362,316.5h1M411,316.5h1M460,316.5h1M509,316.5h1M558,316.5h1M607,316.5h1M656,316.5h1M705,316.5h1M754,316.5h1M803,316.5h1M852,316.5h1M901,316.5h1M264,326.5h1M313,326.5h1M362,326.5h1M411,326.5h1M460,326.5h1M509,326.5h1M558,326.5h1M607,326.5h1M656,326.5h1M705,326.5h1M754,326.5h1M803,326.5h1M852,326.5h1M901,326.5h1M264,335.5h1M313,335.5h1M362,335.5h1M411,335.5h1M460,335.5h1M509,335.5h1M558,335.5h1M607,335.5h1M656,335.5h1M705,335.5h1M754,335.5h1M803,335.5h1M852,335.5h1M901,335.5h1M264,345.5h1M313,345.5h1M362,345.5h1M411,345.5h1M460,345.5h1M509,345.5h1M558,345.5h1M607,345.5h1M656,345.5h1M705,345.5h1M754,345.5h1M803,345.5h1M852,345.5h1M901,345.5h1M235,355.5h1M245,355.5h1M254,355.5h1M264,355.5h1M273,355.5h1M283,355.5h1M293,355.5h1M303,355.5h1M313,355.5h1M323,355.5h1M333,355.5h1M343,355.5h1M352,355.5h1M362,355.5h1M371,355.5h1M381,355.5h1M391,355.5h1M401,355.5h1M411,355.5h1M421,355.5h1M431,355.5h1M441,355.5h1M450,355.5h1M460,355.5h1M469,355.5h1M479,355.5h1M489,355.5h1M499,355.5h1M509,355.5h1M519,355.5h1M529,355.5h1M539,355.5h1M548,355.5h1M558,355.5h1M567,355.5h1M577,355.5h1M587,355.5h1M597,355.5h1M607,355.5h1M617,355.5h1M627,355.5h1M637,355.5h1M646,355.5h1M656,355.5h1M665,355.5h1M675,355.5h1M685,355.5h1M695,355.5h1M705,355.5h1M715,355.5h1M725,355.5h1M735,355.5h1M744,355.5h1M754,355.5h1M763,355.5h1M773,355.5h1M783,355.5h1M793,355.5h1M803,355.5h1M813,355.5h1M823,355.5h1M833,355.5h1M842,355.5h1M852,355.5h1M861,355.5h1M871,355.5h1M881,355.5h1M891,355.5h1M901,355.5h1M911,355.5h1M264,364.5h1M313,364.5h1M362,364.5h1M411,364.5h1M460,364.5h1M509,364.5h1M558,364.5h1M607,364.5h1M656,364.5h1M705,364.5h1M754,364.5h1M803,364.5h1M852,364.5h1M901,364.5h1M264,374.5h1M313,374.5h1M362,374.5h1M411,374.5h1M460,374.5h1M509,374.5h1M558,374.5h1M607,374.5h1M656,374.5h1M705,374.5h1M754,374.5h1M803,374.5h1M852,374.5h1M901,374.5h1M264,384.5h1M313,384.5h1M362,384.5h1M411,384.5h1M460,384.5h1M509,384.5h1M558,384.5h1M607,384.5h1M656,384.5h1M705,384.5h1M754,384.5h1M803,384.5h1M852,384.5h1M901,384.5h1M264,394.5h1M313,394.5h1M362,394.5h1M411,394.5h1M460,394.5h1M509,394.5h1M558,394.5h1M607,394.5h1M656,394.5h1M705,394.5h1M754,394.5h1M803,394.5h1M852,394.5h1M901,394.5h1M235,404.5h1M245,404.5h1M254,404.5h1M264,404.5h1M273,404.5h1M283,404.5h1M293,404.5h1M303,404.5h1M313,404.5h1M323,404.5h1M333,404.5h1M343,404.5h1M352,404.5h1M362,404.5h1M371,404.5h1M381,404.5h1M391,404.5h1M401,404.5h1M411,404.5h1M421,404.5h1M431,404.5h1M441,404.5h1M450,404.5h1M460,404.5h1M469,404.5h1M479,404.5h1M489,404.5h1M499,404.5h1M509,404.5h1M519,404.5h1M529,404.5h1M539,404.5h1M548,404.5h1M558,404.5h1M567,404.5h1M577,404.5h1M587,404.5h1M597,404.5h1M607,404.5h1M617,404.5h1M627,404.5h1M637,404.5h1M646,404.5h1M656,404.5h1M665,404.5h1M675,404.5h1M685,404.5h1M695,404.5h1M705,404.5h1M715,404.5h1M725,404.5h1M735,404.5h1M744,404.5h1M754,404.5h1M763,404.5h1M773,404.5h1M783,404.5h1M793,404.5h1M803,404.5h1M813,404.5h1M823,404.5h1M833,404.5h1M842,404.5h1M852,404.5h1M861,404.5h1M871,404.5h1M881,404.5h1M891,404.5h1M901,404.5h1M911,404.5h1M264,414.5h1M313,414.5h1M362,414.5h1M411,414.5h1M460,414.5h1M509,414.5h1M558,414.5h1M607,414.5h1M656,414.5h1M705,414.5h1M754,414.5h1M803,414.5h1M852,414.5h1M901,414.5h1M264,424.5h1M313,424.5h1M362,424.5h1M411,424.5h1M460,424.5h1M509,424.5h1M558,424.5h1M607,424.5h1M656,424.5h1M705,424.5h1M754,424.5h1M803,424.5h1M852,424.5h1M901,424.5h1M264,434.5h1M313,434.5h1M362,434.5h1M411,434.5h1M460,434.5h1M509,434.5h1M558,434.5h1M607,434.5h1M656,434.5h1M705,434.5h1M754,434.5h1M803,434.5h1M852,434.5h1M901,434.5h1M264,443.5h1M313,443.5h1M362,443.5h1M411,443.5h1M460,443.5h1M509,443.5h1M558,443.5h1M607,443.5h1M656,443.5h1M705,443.5h1M754,443.5h1M803,443.5h1M852,443.5h1M901,443.5h1M235,453.5h1M245,453.5h1M254,453.5h1M264,453.5h1M273,453.5h1M283,453.5h1M293,453.5h1M303,453.5h1M313,453.5h1M323,453.5h1M333,453.5h1M343,453.5h1M352,453.5h1M362,453.5h1M371,453.5h1M381,453.5h1M391,453.5h1M401,453.5h1M411,453.5h1M421,453.5h1M431,453.5h1M441,453.5h1M450,453.5h1M460,453.5h1M469,453.5h1M479,453.5h1M489,453.5h1M499,453.5h1M509,453.5h1M519,453.5h1M529,453.5h1M539,453.5h1M548,453.5h1M558,453.5h1M567,453.5h1M577,453.5h1M587,453.5h1M597,453.5h1M607,453.5h1M617,453.5h1M627,453.5h1M637,453.5h1M646,453.5h1M656,453.5h1M665,453.5h1M675,453.5h1M685,453.5h1M695,453.5h1M705,453.5h1M715,453.5h1M725,453.5h1M735,453.5h1M744,453.5h1M754,453.5h1M763,453.5h1M773,453.5h1M783,453.5h1M793,453.5h1M803,453.5h1M813,453.5h1M823,453.5h1M833,453.5h1M842,453.5h1M852,453.5h1M861,453.5h1M871,453.5h1M881,453.5h1M891,453.5h1M901,453.5h1M911,453.5h1M264,462.5h1M313,462.5h1M362,462.5h1M411,462.5h1M460,462.5h1M509,462.5h1M558,462.5h1M607,462.5h1M656,462.5h1M705,462.5h1M754,462.5h1M803,462.5h1M852,462.5h1M901,462.5h1M264,472.5h1M313,472.5h1M362,472.5h1M411,472.5h1M460,472.5h1M509,472.5h1M558,472.5h1M656,472.5h1M705,472.5h1M754,472.5h1M803,472.5h1M852,472.5h1M901,472.5h1M610,474.5h1M264,482.5h1M313,482.5h1M362,482.5h1M411,482.5h1M460,482.5h1M509,482.5h1M558,482.5h1M656,482.5h1M705,482.5h1M754,482.5h1M803,482.5h1M852,482.5h1M901,482.5h1M610,484.5h1M264,492.5h1M313,492.5h1M362,492.5h1M411,492.5h1M460,492.5h1M509,492.5h1M656,492.5h1M705,492.5h1M754,492.5h1M803,492.5h1M852,492.5h1M901,492.5h1M610,494.5h1M235,502.5h1M245,502.5h1M254,502.5h1M264,502.5h1M273,502.5h1M283,502.5h1M293,502.5h1M303,502.5h1M313,502.5h1M323,502.5h1M333,502.5h1M343,502.5h1M352,502.5h1M362,502.5h1M371,502.5h1M381,502.5h1M391,502.5h1M401,502.5h1M411,502.5h1M421,502.5h1M431,502.5h1M441,502.5h1M450,502.5h1M460,502.5h1M469,502.5h1M479,502.5h1M489,502.5h1M499,502.5h1M509,502.5h1M519,502.5h1M529,502.5h1M539,502.5h1M548,502.5h1M617,502.5h1M627,502.5h1M637,502.5h1M646,502.5h1M656,502.5h1M665,502.5h1M675,502.5h1M685,502.5h1M695,502.5h1M705,502.5h1M715,502.5h1M725,502.5h1M735,502.5h1M744,502.5h1M754,502.5h1M763,502.5h1M773,502.5h1M783,502.5h1M793,502.5h1M803,502.5h1M813,502.5h1M823,502.5h1M833,502.5h1M842,502.5h1M852,502.5h1M861,502.5h1M871,502.5h1M881,502.5h1M891,502.5h1M901,502.5h1M911,502.5h1M600,504.5h1M610,504.5h1M264,512.5h1M313,512.5h1M362,512.5h1M411,512.5h1M460,512.5h1M509,512.5h1M656,512.5h1M705,512.5h1M754,512.5h1M803,512.5h1M852,512.5h1M901,512.5h1M610,514.5h1M264,522.5h1M313,522.5h1M362,522.5h1M411,522.5h1M460,522.5h1M509,522.5h1M656,522.5h1M705,522.5h1M754,522.5h1M803,522.5h1M852,522.5h1M901,522.5h1M610,524.5h1M264,525.5h1M313,525.5h1M362,525.5h1M411,525.5h1M460,525.5h1M509,525.5h1M656,525.5h1M705,525.5h1M754,525.5h1M803,525.5h1M852,525.5h1M901,525.5h1M610,534.5h1M264,535.5h1M313,535.5h1M362,535.5h1M411,535.5h1M460,535.5h1M509,535.5h1M561,535.5h1M656,535.5h1M705,535.5h1M754,535.5h1M803,535.5h1M852,535.5h1M901,535.5h1M610,543.5h1M264,544.5h1M313,544.5h1M362,544.5h1M411,544.5h1M460,544.5h1M509,544.5h1M558,544.5h1M656,544.5h1M705,544.5h1M754,544.5h1M803,544.5h1M852,544.5h1M901,544.5h1M235,554.5h1M245,554.5h1M254,554.5h1M264,554.5h1M273,554.5h1M283,554.5h1M293,554.5h1M303,554.5h1M313,554.5h1M323,554.5h1M333,554.5h1M343,554.5h1M352,554.5h1M362,554.5h1M371,554.5h1M381,554.5h1M391,554.5h1M401,554.5h1M411,554.5h1M421,554.5h1M431,554.5h1M441,554.5h1M450,554.5h1M460,554.5h1M469,554.5h1M479,554.5h1M489,554.5h1M499,554.5h1M509,554.5h1M519,554.5h1M529,554.5h1M539,554.5h1M548,554.5h1M558,554.5h1M567,554.5h1M577,554.5h1M587,554.5h1M597,554.5h1M607,554.5h1M617,554.5h1M627,554.5h1M637,554.5h1M646,554.5h1M656,554.5h1M665,554.5h1M675,554.5h1M685,554.5h1M695,554.5h1M705,554.5h1M715,554.5h1M725,554.5h1M735,554.5h1M744,554.5h1M754,554.5h1M763,554.5h1M773,554.5h1M783,554.5h1M793,554.5h1M803,554.5h1M813,554.5h1M823,554.5h1M833,554.5h1M842,554.5h1M852,554.5h1M861,554.5h1M871,554.5h1M881,554.5h1M891,554.5h1M901,554.5h1M911,554.5h1" stroke="#808080" stroke-width="1" fill="none" shape-rendering="crispEdges"></path>
<!-- swimlane -->
<path d="M225.5,51V556M919.5,51V556" stroke="#333" stroke-width="1" fill="none"></path>
<!-- note box -->
<rect x="267" y="40" width="229" height="93" fill="#b0b0b0"></rect>
<rect x="265.5" y="40.5" width="228" height="90" fill="#fff" stroke="#333"></rect>
<path d="M266,77.5H494" stroke="#333"></path>
<!-- dashed anchor -->
<path d="M494,130.5H502.1M512,130.5H522M531.7,130.5H542M544.3,130.7Q547.5,131.3 547.5,135.5V140.2M547.5,150.00V159.80M547.5,169.85V179.65M547.5,189.70V199.50M547.5,209.55V219.35M547.5,229.40V239.20M547.5,249.25V259.05M547.5,269.10V278.50" stroke="#333" fill="none"></path>
<!-- table -->
<rect x="641" y="40" width="1" height="133" fill="#8f8f8f"></rect><rect x="642" y="40" width="1" height="132" fill="#b8b8b8"></rect>
<rect x="641" y="172" width="279" height="1" fill="#a8a8a8"></rect>
<rect x="920" y="40" width="2" height="131" fill="#b4b4b4"></rect>
<rect x="919" y="40" width="1" height="133" fill="#444"></rect>
<g fill="none" shape-rendering="crispEdges"><path d="M645,60.5H744M746,60.5H917M645,85.5H744M746,85.5H917M645,127.5H744M746,127.5H917M645,168.5H744M746,168.5H917" stroke="#a8a8a8"></path><path d="M743.5,38V61M916.5,38V61M743.5,63V86M916.5,63V86M743.5,88V128M916.5,88V128M743.5,130V169M916.5,130V169" stroke="#808080"></path><path d="M645.5,38V61M746.5,38V61M645.5,63V86M746.5,63V86M645.5,88V128M746.5,88V128M645.5,130V169M746.5,130V169" stroke="#8c8c8c"></path><path d="M645,38.5H744M746,38.5H917M645,63.5H744M746,63.5H917M645,88.5H744M746,88.5H917M645,130.5H744M746,130.5H917" stroke="#5c5c5c"></path></g>
<!-- pins -->
<rect x="171.5" y="278.5" width="107" height="24" fill="#ccccff" stroke="#444"></rect>
<rect x="862.5" y="288.5" width="114" height="23" fill="#ccccff" stroke="#444"></rect>
<!-- action -->
<rect x="511" y="276" width="152" height="97" fill="#fff" stroke="#000" stroke-width="2"></rect>
<rect x="516" y="281" width="146" height="92" rx="9" fill="#a8a8a8"></rect>
<rect x="513.5" y="278.5" width="146" height="92" rx="9" fill="#e0dfbf" stroke="#6b6b6b"></rect>
<rect x="638.5" y="283.5" width="14" height="14" fill="#fff" stroke="#777"></rect>
<rect x="640" y="285" width="11" height="11" fill="#fff" stroke="#000" stroke-width="1.6"></rect>
<circle cx="645.5" cy="290.5" r="3.2" fill="#bbb" stroke="#222" stroke-width="1.3"></circle>
<circle cx="645.5" cy="290.5" r="1" fill="#222"></circle>
<!-- final node -->
<rect x="553.7" y="501.7" width="27.6" height="27.6" fill="none" stroke="#ffff00" stroke-width="2.2"></rect>
<circle cx="569.4" cy="517.3" r="11.4" fill="#b4b4b4"></circle>
<circle cx="567.6" cy="515.3" r="11.2" fill="#fff" stroke="#333" stroke-width="1"></circle>
<circle cx="567.6" cy="515.3" r="6.4" fill="#444"></circle>
<g fill="#000"><rect x="551" y="499" width="6" height="6"></rect><rect x="578.5" y="499" width="6" height="6"></rect><rect x="551" y="526.7" width="6" height="6"></rect><rect x="578.5" y="526.7" width="6" height="6"></rect></g>
<!-- flows -->
<path d="M567.7,51V278" stroke="#454545" stroke-width="2" fill="none"></path>
<path d="M562,267.7L567.6,278.8L573.2,267.7" stroke="#454545" stroke-width="2" fill="none"></path>
<path d="M567.7,374V503" stroke="#454545" stroke-width="2" fill="none"></path>
<path d="M562,494L567.6,504.3L573.2,494" stroke="#454545" stroke-width="2" fill="none"></path>
<path d="M279,283.5H513M504.5,279L512.8,283.5L504.5,288" stroke="#333" fill="none"></path>
<path d="M663,288.5H862M853,283.5L862,288.5L853,293.5" stroke="#333" fill="none"></path>
<path d="M547.5,269.1V278.5" stroke="#333" fill="none"></path>
</svg>
<!-- texts -->
<div class="t dg" style="left: 268.9px; top: 46px; letter-spacing: 0.088px;">an input string to an output string,</div>
<div class="t dg" style="left: 268.9px; top: 61px; letter-spacing: 0.022px;">converting it to upper case.</div>
<div class="t dg" style="left: 345.2px; top: 81px; font-style: italic; color: rgb(153, 153, 153); font-size: 10.5px; letter-spacing: 0.038px;">«ActionScript»</div>
<div class="t dg" style="left: 268.9px; top: 94px; letter-spacing: 0.089px;">script = "set outputTitle =</div>
<div class="t dg" style="left: 268.9px; top: 110px; letter-spacing: 0.173px;">inputTitle.toUpper();"</div>

<div class="t dg" style="left:649px;top:43px">Creation date</div>
<div class="t dg" style="left:750px;top:43px">6/21/07 4:34 PM</div>
<div class="t dg" style="left: 649px; top: 69px; letter-spacing: 0.042px;">Modification date</div>
<div class="t dg" style="left: 749.9px; top: 69px; letter-spacing: -0.133px;">3/9/16 8:17 AM</div>
<div class="t dg" style="left: 649px; top: 102px; letter-spacing: 0.215px;">Documentation</div>
<div class="t dg" style="left: 749.9px; top: 94px; letter-spacing: 0.109px;">- add documentation via</div>
<div class="t dg" style="left: 749.9px; top: 110px; letter-spacing: 0.27px;">diagram specification -</div>
<div class="t dg" style="left: 648.3px; top: 144px; letter-spacing: -0.218px;">TODO</div>
<div class="t dg" style="left: 749.9px; top: 136px; letter-spacing: 0.082px;">- add To Do via diagram</div>
<div class="t dg" style="left: 749.9px; top: 152px; letter-spacing: 0.238px;">specification -</div>

<div class="t dg b" style="left: 177.7px; top: 283px; letter-spacing: -0.245px;">inputTitle : String</div>
<div class="t dg b" style="left: 867.8px; top: 293px; letter-spacing: -0.226px;">outputTitle : String</div>
<div class="t dg" style="left: 538px; top: 283px; color: rgb(26, 26, 255); letter-spacing: -0.06px;">«ActionScript»</div>
<div class="t dg b" style="left: 553.4px; top: 300px; letter-spacing: -0.325px;">Get Title</div>
<div class="t dg" style="left: 515.9px; top: 319px; letter-spacing: 0.16px;">{script = "set</div>
<div class="t dg" style="left: 515.9px; top: 335px; letter-spacing: 0.039px;">outputTitle =</div>
<div class="t dg" style="left: 515.9px; top: 351px; letter-spacing: 0.142px;">inputTitle.toUpper();"}</div>
</div></div>
<!-- scrollbars -->
<div class="a" style="left:983px;top:51px;width:16px;height:505px;background:#f0f0f0"></div>
<div class="a" style="left:983px;top:102px;width:15px;height:191px;background:#cdcdcd"></div>
<div class="a" style="left:166px;top:556px;width:817px;height:16px;background:#f0f0f0"></div>
<div class="a" style="left:183px;top:556px;width:489px;height:15px;background:#cdcdcd"></div>
<div class="a" style="left:983px;top:556px;width:16px;height:16px;background:#fff"></div>
<svg style="left:0;top:0" width="1003" height="840" viewBox="0 0 1003 840">
<g fill="none" stroke="#505050" stroke-width="2">
<path d="M987,62.5L990.5,59L994,62.5"></path><path d="M987,544L990.5,547.5L994,544"></path>
<path d="M175.5,560L172,563.5L175.5,567"></path><path d="M972,560L975.5,563.5L972,567"></path>
</g></svg>
<!-- bottom: tab strip -->
<div class="a" style="left:0;top:603px;width:1003px;height:1px;background:#a0a0a0"></div>
<div class="a" style="left:86px;top:583px;width:247px;height:21px;background:#e6e6e6;border:1px solid #a0a0a0;border-bottom:none"></div>
<div class="t" style="left: 33px; top: 586px; letter-spacing: -0.3px; transform-origin: 0px 50%; transform: scaleX(0.9558);">Messages</div>
<div class="t" style="left: 110.1px; top: 586px; letter-spacing: -0.457px;">lesson1.EducationLesson1.EducationLesson1</div>
<svg style="left:0;top:0" width="200" height="840" viewBox="0 0 200 840"><defs><g id="e2e">
<path d="M0,0H6V14H0V11.2H3.2V8H0V5.8H3.2V2.6H0Z" fill="#8fab2c"></path><path d="M14,0H8V14H14V11.2H10.8V8H14V5.8H10.8V2.6H14Z" fill="#1f5b7c"></path>
<path d="M4.8,6.2Q5,4.6 6.9,4.6Q8.9,4.7 8.8,6.4Q8.7,7.6 5,10.6H9.2" fill="none" stroke="#fff" stroke-width="1.5"></path></g></defs>
<use href="#e2e" x="15" y="586"></use><use href="#e2e" x="92" y="586"></use></svg>
<!-- title bar -->
<div class="a" style="left:0;top:605px;width:1003px;height:18px;background:linear-gradient(#f5f5f5,#ececec 50%,#dcdcdc);border-top:1px solid #b0b0b0;border-bottom:1px solid #b0b0b0;border-left:1px solid #a8a8a8"></div>
<div class="t" style="left: 5px; top: 607px; letter-spacing: -0.447px;">lesson1.EducationLesson1.EducationLesson1</div>
<svg style="left:940px;top:610px" width="52" height="12" viewBox="940 610 52 12"><g fill="none" stroke="#000" stroke-width="1.3">
<path d="M944.5,613V611.5H951V617H949.5"></path><rect x="941.6" y="614.6" width="6.5" height="4.5"></rect>
<path d="M964,611.5H969M964.6,611.5V616M968.4,611.5V616M963,616.2H970M966.5,616.5V620.5"></path>
<path d="M982.5,611.5L989,618M989,611.5L982.5,618" stroke-width="1.1"></path></g></svg>
<!-- yellow focus border -->
<div class="a" style="left:0;top:625px;width:1003px;height:1px;background:#b8b8c8"></div>
<div class="a" style="left:0;top:625px;width:1px;height:190px;background:#9a9ab0"></div>
<div class="a" style="left:1px;top:814px;width:1002px;height:1px;background:#c4c4d0"></div>
<div class="a" style="left:1px;top:626px;width:1002px;height:188px;border:1px solid #ffff00"></div>
<div class="a" style="left:2px;top:812px;width:1000px;height:1px;background:#a6a6b8"></div>
<div class="a" style="left:1001px;top:627px;width:1px;height:186px;background:#a6a6b8"></div>
<!-- toolbar -->
<div class="a" style="left:4px;top:629px;width:107px;height:21px;background:#e9e9e9;border:1px solid #adadad;box-shadow:inset 0 -2px 0 #dcdcdc"></div>
<div class="t" style="left: 18px; top: 632px; letter-spacing: -0.336px;">Open Test Case</div>
<div class="a" style="left:119px;top:629px;width:1px;height:21px;background:#a0a0a0"></div>
<div class="a" style="left:127px;top:629px;width:28px;height:20px;background:#efefef;border:1px solid #bcbcbc"></div>
<svg style="left:141px;top:637px" width="10" height="7"><path d="M1,1L4.5,4.5L8,1" fill="none" stroke="#a8a8a8" stroke-width="1.6"></path></svg>
<div class="a" style="left:159px;top:633px;width:13px;height:13px;background:#e6e6e6;border:1px solid #bcbcbc"></div>
<div class="t" style="left: 175.2px; top: 632px; color: rgb(128, 128, 128); letter-spacing: -0.296px;">Trace</div>
<div class="a" style="left:209px;top:629px;width:77px;height:21px;background:#ececec;border:1px solid #d8d8d8"></div>
<div class="t" style="left: 223px; top: 632px; color: rgb(138, 138, 138); letter-spacing: -0.569px;">Open GUI</div>
<div class="a" style="left:294px;top:629px;width:1px;height:21px;background:#a0a0a0"></div>
<div class="a" style="left:419px;top:629px;width:1px;height:21px;background:#a0a0a0"></div>
<svg style="left:0;top:0" width="1003" height="840" viewBox="0 0 1003 840">
<defs><radialGradient id="bl" cx=".35" cy=".35" r=".7"><stop offset="0" stop-color="#cfe6ff"></stop><stop offset="1" stop-color="#4a8fe0"></stop></radialGradient>
<linearGradient id="rd" x1="0" y1="0" x2="1" y2="0"><stop offset="0" stop-color="#f08a80"></stop><stop offset=".45" stop-color="#e02a24"></stop><stop offset="1" stop-color="#a81510"></stop></linearGradient>
<linearGradient id="gn" x1="0" y1="0" x2="1" y2="1"><stop offset="0" stop-color="#55c93a"></stop><stop offset="1" stop-color="#2f9a22"></stop></linearGradient></defs>
<path d="M306,634.5H310M306,636.5H310M306,638.5H310M306,640.5H310M306,642.5H310" stroke="#2b4a2b" stroke-width="1"></path>
<path d="M309.6,632.6L320,638.5L309.6,644.4Z" fill="url(#gn)" stroke="#2a7a1e" stroke-width="1.1"></path>
<g fill="none" stroke="#2e3a58" stroke-width="1.3"><path d="M334,634H329V642.6H333M331.2,640.6L333.2,642.6L331.2,644.6"></path>
<path d="M351.5,638V633.6H360V637.5M358,635.8L360,637.8L362,635.8"></path>
<path d="M375.5,637.5V633.6H385M383.2,631.7L385.2,633.7L383.2,635.7"></path></g>
<g fill="url(#bl)" stroke="#2a5aa8" stroke-width=".9"><circle cx="337.7" cy="633.8" r="3"></circle><circle cx="337.7" cy="642.6" r="3"></circle><circle cx="359.8" cy="642.4" r="3.3"></circle><circle cx="375.6" cy="641.6" r="3.3"></circle>
<circle cx="444" cy="637" r="1.5"></circle><circle cx="444" cy="642" r="1.5"></circle></g>
<rect x="395" y="633" width="4.8" height="11.6" fill="#9a9a9a"></rect><rect x="402.2" y="633" width="4.8" height="11.6" fill="#9a9a9a"></rect>
<rect x="430.8" y="632.4" width="9.6" height="13.8" rx="4.6" fill="url(#rd)" stroke="#b02018" stroke-width=".8"></rect>
<path d="M433.5,637.5Q436,636 438.5,637.5" stroke="#601008" stroke-width="1" fill="none"></path><ellipse cx="434" cy="635" rx="1.6" ry="1.2" fill="#ffd8d0" opacity=".8"></ellipse>
</svg>
<!-- inner tabs -->
<div class="a" style="left:36px;top:654px;width:149px;height:18px;background:#ececec;border:1px solid #a0a0a0;border-bottom:none"></div>
<div class="t" style="left: 40.3px; top: 656px; letter-spacing: -0.281px;">Watches/Script - Session: 11</div>
<div class="t" style="left: 190.3px; top: 656px; letter-spacing: -0.374px;">Callstack - Session: 11</div>
<div class="a" style="left:301px;top:656px;width:1px;height:15px;background:#a0a0a0"></div>
<!-- tree box -->
<div class="a" style="left:28px;top:672px;width:973px;height:1px;background:#aaa"></div>
<div class="a" style="left:28px;top:672px;width:1px;height:140px;background:#a8a8a8"></div>
<div class="a" style="left:29px;top:673px;width:972px;height:139px;background:#e0e0e0"></div>
<div class="a" style="left:30px;top:674px;width:971px;height:138px;background:#fff"></div>
<div class="a" style="left:30px;top:674px;width:410px;height:136px;border:1px solid #7a808c;border-top:2px solid #6e6e78;border-left:2px solid #6c6e74"></div>
<div class="a" style="left:443px;top:674px;width:556px;height:136px;border:1px solid #7a808c;border-top:2px solid #6e6e78"></div>
<!-- tree scrollbar -->
<div class="a" style="left:32px;top:793px;width:407px;height:16px;background:#f0f0f0"></div>
<div class="a" style="left:49px;top:793px;width:370px;height:16px;background:#cdcdcd"></div>
<svg style="left:0;top:0" width="1003" height="840"><g fill="none" stroke="#505050" stroke-width="2"><path d="M42.5,797.5L39,801L42.5,804.5"></path><path d="M428.5,797.5L432,801L428.5,804.5"></path></g></svg>
<!-- tree rows -->
<div class="t" style="left: 121.2px; top: 676px; letter-spacing: -0.371px;">Session: 11)</div>
<div class="t" style="left:184px;top:676px;color:#b8b8b8;letter-spacing:-0.26px;width:255px;overflow:hidden">(urn:Services.GetTitleService.Ports.GetTitlePortType)</div>
<div class="t" style="left: 89.7px; top: 691px; color: rgb(46, 139, 50); letter-spacing: -0.217px;">inputTitle</div><div class="t" style="left:134px;top:691px">:</div><div class="t" style="left: 140.2px; top: 691px; color: rgb(205, 141, 79); letter-spacing: -0.358px;">Base Types.String</div><div class="t" style="left:232.5px;top:691px">=</div><div class="t" style="left: 242.4px; top: 691px; color: rgb(35, 35, 142); letter-spacing: -0.551px;">"Price Comparison"</div>
<div class="t" style="left: 89.7px; top: 707px; color: rgb(46, 139, 50); letter-spacing: -0.158px;">outputTitle</div><div class="t" style="left:141.5px;top:707px">:</div><div class="t" style="left: 148.1px; top: 707px; color: rgb(205, 141, 79); letter-spacing: -0.352px;">Base Types.String</div><div class="t" style="left:240px;top:707px">=</div><div class="t" style="left: 250.3px; top: 707px; color: rgb(35, 35, 142); letter-spacing: -0.3px; transform-origin: 0px 50%; transform: scaleX(0.9173);">"PRICE COMPARISON"</div>
<svg style="left:0;top:0" width="1003" height="840" viewBox="0 0 1003 840">
<defs><linearGradient id="rs" x1="0" y1="0" x2="1" y2="1"><stop offset="0" stop-color="#f4c0a0"></stop><stop offset=".35" stop-color="#ee6a50"></stop><stop offset="1" stop-color="#c80a0a"></stop></linearGradient>
<g id="vic"><rect x=".65" y=".65" width="10.7" height="11.7" rx="3.3" fill="#fff" stroke="#000" stroke-width="1.3"></rect><path d="M3,2.5H6M7,2.5H8M2,4.5H9M2,6.5H4M5,6.5H9M2,8.5H6M7,8.5H9M3,10.5H8" stroke="#000" stroke-width="1" shape-rendering="crispEdges"></path></g></defs>
<path d="M59.5,694V715M60,698.5H61M62,698.5H70M60,714.5H61M62,714.5H70" fill="none" stroke="#000" stroke-dasharray="1 1" shape-rendering="crispEdges"></path>
<use href="#vic" x="72" y="692"></use><use href="#vic" x="72" y="708"></use>
<!-- bug -->
<path d="M15.5,657.6L23.1,665.3L15.5,673L7.9,665.3Z" fill="#3f86e4" stroke="#2460c8" stroke-width="1"></path>
<path d="M15.5,660L20.8,665.3L15.5,670.6L10.2,665.3Z" fill="none" stroke="#cfe6ff" stroke-width="1.3"></path>
<path d="M7.6,660.8L8.8,662.2M7.6,670L8.8,668.6M11.2,659.6L11.6,661M11.2,671.2L11.6,669.8" stroke="#2a5a4a" stroke-width="1"></path>
<circle cx="10.7" cy="665.4" r="3.9" fill="#4fc44f" stroke="#2f8a3a" stroke-width=".9"></circle><path d="M8.2,664.2Q10.5,662.8 12.8,664.4M8.6,667Q10.6,668 12.6,666.8" stroke="#2a7a2a" fill="none" stroke-width=".8"></path>
<circle cx="15.6" cy="665.4" r="1.6" fill="#5a3aa0"></circle><path d="M17,664.2L18.3,663.6M17.2,665.4H18.6M17,666.6L18.3,667.2" stroke="#3a2a80" stroke-width=".8"></path>
<rect x="9.2" y="683.2" width="11.7" height="11.4" fill="url(#rs)"></rect><path d="M9.5,694.6V683.5H20.9" fill="none" stroke="#b8a8a8" stroke-width=".6"></path>
</svg>
<!-- orange highlight -->
<div class="a" style="left:31px;top:672px;width:91px;height:21px;background:linear-gradient(#d2d2d2,#ececec 35%,#f6f6f6);border:3px solid #f5821f;box-shadow:1px 2px 4px rgba(0,0,0,.55)"></div>
<div class="a" style="left:36px;top:679px;width:9px;height:9px;border:1px solid #848484;background:#fff"></div>
<div class="a" style="left:38px;top:683px;width:5px;height:1px;background:#000"></div>
<svg style="left:46px;top:683px" width="4" height="1"><path d="M0,.5H4" stroke="#333" stroke-dasharray="1 1" shape-rendering="crispEdges"></path></svg>
<div class="t" style="left: 50.2px; top: 676px; letter-spacing: -0.226px;">getTitle : End</div>

<!-- bottom tabs -->
<div class="a" style="left:104px;top:814px;width:41px;height:19px;background:#ffff00;border:1px solid #a0a0a0;border-top:none"></div>
<div class="t" style="left: 7.4px; top: 817px; letter-spacing: -0.242px;">Preferences</div>
<div class="t" style="left: 77.7px; top: 817px; letter-spacing: -0.355px;">Run</div>
<div class="t" style="left: 107.9px; top: 817px; letter-spacing: -0.473px;">Debug</div>
<div class="t" style="left: 149.6px; top: 817px; letter-spacing: -0.514px;">Remote Debug</div>
<div class="t" style="left: 231.9px; top: 817px; letter-spacing: -0.332px;">Test Cases</div>
<div class="t" style="left: 295.1px; top: 817px; letter-spacing: -0.3px; transform-origin: 0px 50%; transform: scaleX(0.8752);">WSDL</div>
<div class="a" style="left:73px;top:817px;width:1px;height:15px;background:#a0a0a0"></div>
<div class="a" style="left:225px;top:817px;width:1px;height:15px;background:#a0a0a0"></div>
<div class="a" style="left:290px;top:817px;width:1px;height:15px;background:#a0a0a0"></div>
<div class="a" style="left:328px;top:817px;width:1px;height:15px;background:#a0a0a0"></div>

</body></html>
